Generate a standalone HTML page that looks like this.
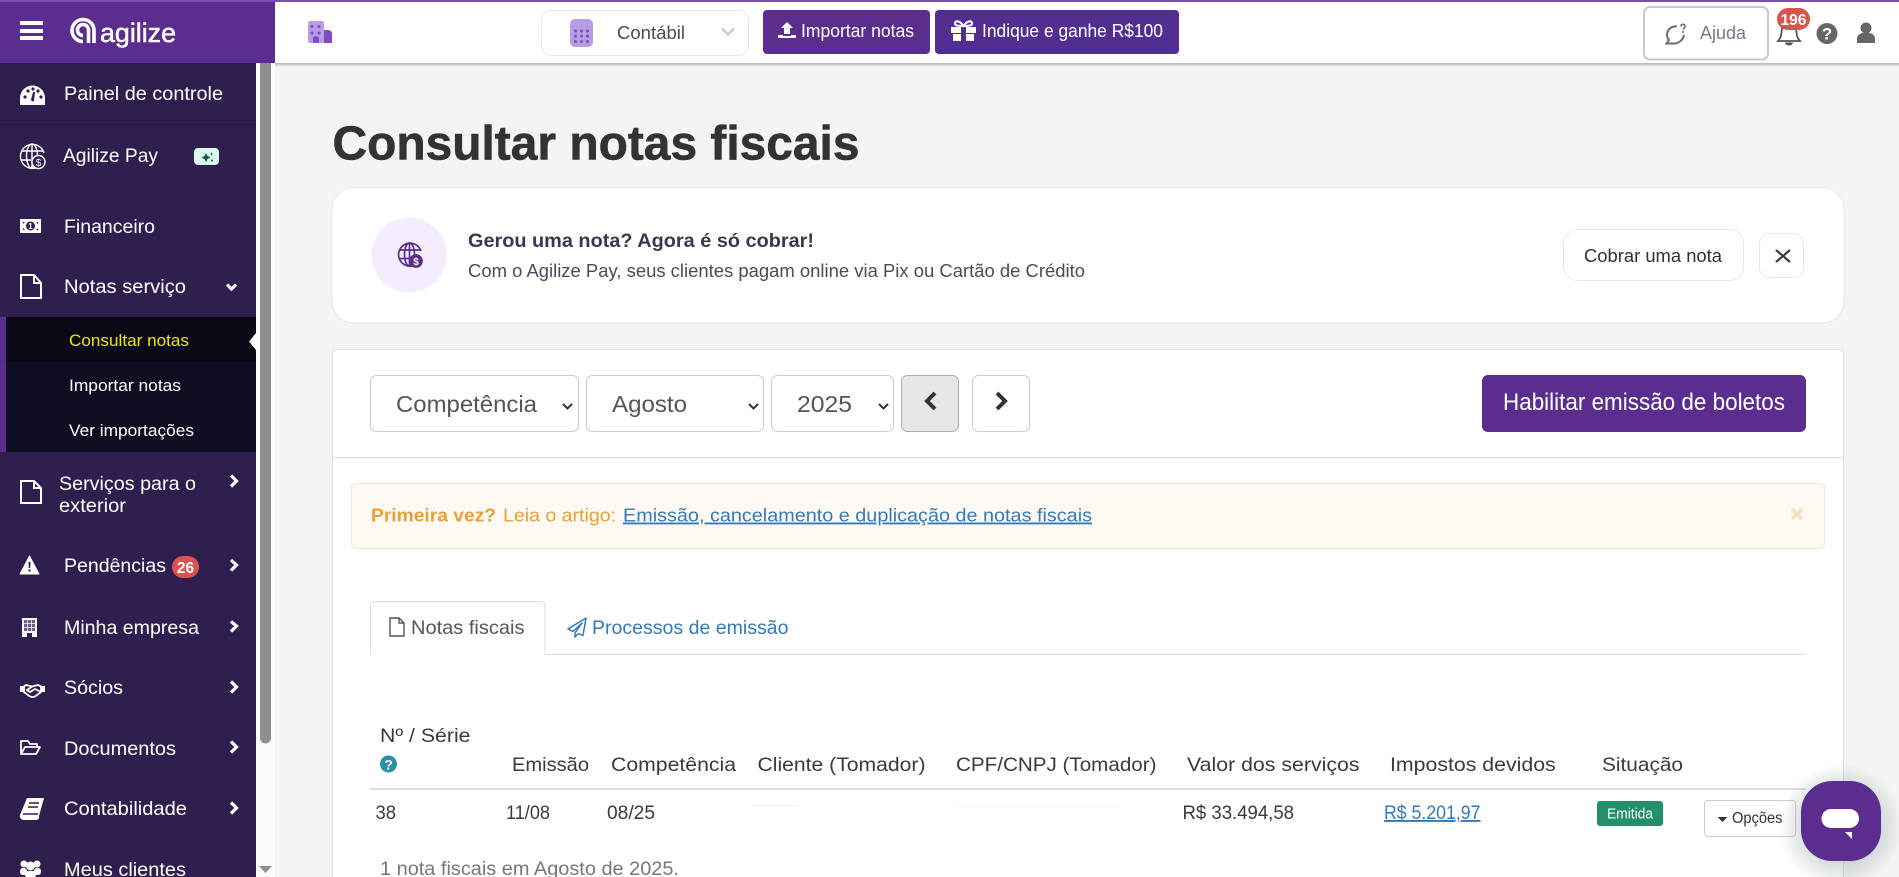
<!DOCTYPE html>
<html lang="pt-BR">
<head>
<meta charset="utf-8">
<title>Consultar notas fiscais</title>
<style>
html,body{margin:0;padding:0;width:1899px;height:877px;overflow:hidden;background:#f4f4f4}
svg{display:block}
text{font-family:"Liberation Sans",Arial,sans-serif}
.s{font-size:19.5px;fill:#fff}
.u{font-size:16.5px;fill:#fff}
.th{font-size:19.5px;fill:#3a3a3a}
.td{font-size:19px;fill:#3a3a3a}
.sel{font-size:23.500px;fill:#555}
</style>
</head>
<body>
<svg width="1899" height="877" viewBox="0 0 1899 877" xmlns="http://www.w3.org/2000/svg">
<defs>
<linearGradient id="sh" x1="0" y1="0" x2="0" y2="1"><stop offset="0" stop-color="#b5b5b5"/><stop offset="1" stop-color="#f4f4f4"/></linearGradient>
<radialGradient id="cs"><stop offset=".6" stop-color="#8a9a9a" stop-opacity=".35"/><stop offset="1" stop-color="#8a9a9a" stop-opacity="0"/></radialGradient>
</defs>

<!-- main background -->
<rect width="1899" height="877" fill="#f4f4f4"/>

<!-- top bar -->
<rect x="275" y="63" width="1624" height="4" fill="url(#sh)"/>
<rect x="275" y="0" width="1624" height="63" fill="#fff"/>
<rect x="0" y="0" width="1899" height="2" fill="#7a4db0"/>

<!-- scrollbar -->
<rect x="256" y="63" width="19" height="814" fill="#fbfbfb"/>
<path d="M260 63H271V738a5.500 5.500 0 0 1-11 0Z" fill="#8f8f8f"/>
<path d="M259 866H272L265.500 873Z" fill="#8f8f8f"/>

<!-- sidebar -->
<rect x="0" y="2" width="275" height="61" fill="#5b2d8e"/>
<rect x="0" y="63" width="256" height="814" fill="#2f1f4e"/>
<rect x="0" y="124" width="256" height="1" fill="#1d1a4a"/>
<rect x="20" y="21" width="23" height="4" fill="#fff"/><rect x="20" y="29" width="23" height="4" fill="#fff"/><rect x="20" y="36" width="23" height="4" fill="#fff"/>
<g fill="none" stroke="#fff" stroke-width="3.600">
<path d="M83 41.500A11 11 0 1 1 94 30V43"/>
<path d="M83 35.500A5.500 5.500 0 1 1 88.500 30V43"/>
</g>
<text x="100" y="42" font-size="26.500" fill="#fff" stroke="#fff" stroke-width=".5" textLength="76" lengthAdjust="spacingAndGlyphs">agilize</text>

<!-- gauge -->
<path d="M20 105V98A12.500 12.500 0 0 1 45 98V105Z" fill="#fff"/>
<g fill="#2f1f4e"><circle cx="25" cy="97" r="1.600"/><circle cx="28" cy="91" r="1.600"/><circle cx="33" cy="89" r="1.600"/><circle cx="38" cy="91" r="1.600"/><circle cx="41" cy="97" r="1.600"/><path d="M33 92l2 0-1 9a2 2 0 0 1-3-1Z"/></g>
<text class="s" x="64" y="100" textLength="159" lengthAdjust="spacingAndGlyphs">Painel de controle</text>

<!-- globe -->
<g fill="none" stroke="#fff" stroke-width="1.400">
<path d="M37 167.500A12 12 0 1 1 44 153"/><ellipse cx="32" cy="156" rx="5.500" ry="12"/><path d="M21 151H43M20.500 160H31M32 144V168"/>
<circle cx="38.500" cy="162" r="6.500" fill="#2f1f4e"/>
</g>
<text x="38.500" y="166" font-size="10" fill="#fff" text-anchor="middle">$</text>
<text class="s" x="63" y="162" textLength="95" lengthAdjust="spacingAndGlyphs">Agilize Pay</text>
<rect x="194" y="148" width="25" height="17" rx="4" fill="#d9f9ef"/>
<path d="M206 153l1.500 3 3 1.500-3 1.500-1.500 3-1.500-3-3-1.500 3-1.500ZM211.500 152.500l1 1.500-1 1.500-1-1.500ZM212 159l1 1.500-1 1.500-1-1.500Z" fill="#14563f"/>

<!-- money -->
<rect x="20" y="219" width="21" height="14" fill="#fff"/>
<circle cx="30.500" cy="226" r="4.500" fill="#2f1f4e"/>
<path d="M23 222H25L23 224ZM38 222H36L38 224ZM23 230H25L23 228ZM38 230H36L38 228Z" fill="#2f1f4e"/>
<text x="30.500" y="229" font-size="8" font-weight="bold" fill="#fff" text-anchor="middle">1</text>
<text class="s" x="64" y="233" textLength="91" lengthAdjust="spacingAndGlyphs">Financeiro</text>

<!-- doc -->
<path d="M21 275H34L41 283V298H21ZM34 275V283H41" fill="none" stroke="#fff" stroke-width="2"/>
<text class="s" x="64" y="293" textLength="122" lengthAdjust="spacingAndGlyphs">Notas serviço</text>
<path d="M227 284.500L231.500 289L236 284.500" fill="none" stroke="#fff" stroke-width="3.200"/>

<!-- submenu -->
<rect x="0" y="317" width="256" height="135" fill="#0f0d22"/>
<rect x="6" y="317" width="250" height="45" fill="#0a0814"/>
<rect x="0" y="317" width="6" height="135" fill="#5b2d8e"/>
<path d="M256 333V350L249 341.500Z" fill="#fff"/>
<text class="u" x="69" y="346" textLength="120" lengthAdjust="spacingAndGlyphs" style="fill:#e8e800">Consultar notas</text>
<text class="u" x="69" y="391" textLength="112" lengthAdjust="spacingAndGlyphs">Importar notas</text>
<text class="u" x="69" y="436" textLength="125" lengthAdjust="spacingAndGlyphs">Ver importações</text>

<!-- exterior -->
<path d="M21 481H34L41 488V503H21ZM34 481V488H41" fill="none" stroke="#fff" stroke-width="2"/>
<text class="s" x="59" y="490" textLength="137" lengthAdjust="spacingAndGlyphs">Serviços para o</text>
<text class="s" x="59" y="512" textLength="67" lengthAdjust="spacingAndGlyphs">exterior</text>
<path d="M231 475.500L236.500 481L231 486.500" fill="none" stroke="#fff" stroke-width="3.200"/>

<!-- pendencias -->
<path d="M29.500 556L39 574H20Z" fill="#fff" stroke="#fff" stroke-linejoin="round"/>
<path d="M28.500 562H30.500L30.200 568H28.800ZM28.500 569.500H30.500V571.500H28.500Z" fill="#2f1f4e"/>
<text class="s" x="64" y="572" textLength="102" lengthAdjust="spacingAndGlyphs">Pendências</text>
<rect x="172" y="556" width="27" height="22" rx="11" fill="#d9534f"/>
<text x="185.500" y="573" font-size="15.500" font-weight="bold" fill="#fff" text-anchor="middle">26</text>
<path d="M231 560L236.500 565L231 570.500" fill="none" stroke="#fff" stroke-width="3.200"/>

<!-- minha empresa -->
<rect x="22" y="618" width="15" height="19" fill="#fff"/>
<rect x="24" y="620" width="11" height="11" fill="#6a5f85"/>
<path d="M27.500 620v11M31.500 620v11M24 623.500h11M24 627.500h11" stroke="#fff" stroke-width=".7"/>
<path d="M27 637v-4h5v4z" fill="#2f1f4e"/>
<text class="s" x="64" y="634" textLength="135" lengthAdjust="spacingAndGlyphs">Minha empresa</text>
<path d="M231 621.500L236.500 626L231 631.500" fill="none" stroke="#fff" stroke-width="3.200"/>

<!-- socios -->
<path d="M26 685L32 686.500L38 685L41 686.500V692L35 696.500C33 697.500 30 697 28 695L24 692V686.500Z" fill="none" stroke="#fff" stroke-width="1.800"/>
<path d="M33 686L27 690L30 692L35 689L41 692" fill="none" stroke="#fff" stroke-width="1.800"/>
<path d="M20 686h3.500v6h-3.500zM41.500 686h3.500v6h-3.500z" fill="#fff"/>
<text class="s" x="64" y="694" textLength="59" lengthAdjust="spacingAndGlyphs">Sócios</text>
<path d="M231 681.500L236.500 687L231 692.500" fill="none" stroke="#fff" stroke-width="3.200"/>

<!-- documentos -->
<path d="M21 754V741H28L30 744H37V747M21 754H36L40 747H25Z" fill="none" stroke="#fff" stroke-width="1.800" stroke-linejoin="round"/>
<text class="s" x="64" y="755" textLength="112" lengthAdjust="spacingAndGlyphs">Documentos</text>
<path d="M231 741.500L236.500 747L231 752.500" fill="none" stroke="#fff" stroke-width="3.200"/>

<!-- contabilidade -->
<path d="M27 798H44L39 816A3 3 0 0 1 36 820H24A4 4 0 0 1 20 815Z" fill="#fff"/>
<path d="M29 803H39M28 807H38" stroke="#2f1f4e" stroke-width="1.600"/>
<path d="M23 814H38" stroke="#2f1f4e" stroke-width="1.500"/>
<text class="s" x="64" y="815" textLength="123" lengthAdjust="spacingAndGlyphs">Contabilidade</text>
<path d="M231 802.500L236.500 808L231 813.500" fill="none" stroke="#fff" stroke-width="3.200"/>

<!-- clientes -->
<g fill="#fff"><circle cx="24" cy="864" r="3.500"/><circle cx="37" cy="864" r="3.500"/><circle cx="30.500" cy="866" r="4.500"/><rect x="20" y="868" width="7" height="7" rx="3"/><rect x="34" y="868" width="7" height="7" rx="3"/><rect x="25" y="871" width="11" height="6" rx="2"/></g>
<text class="s" x="64" y="876" textLength="122" lengthAdjust="spacingAndGlyphs">Meus clientes</text>

<!-- top bar content -->
<rect x="308" y="21" width="16" height="22" rx="2" fill="#b79de3"/>
<path d="M324 30H328A4 4 0 0 1 332 34V43H324Z" fill="#7e4cc0"/>
<path d="M313 43V39A3 3 0 0 1 319 39V43Z" fill="#7e4cc0"/>
<g fill="#7e4cc0"><circle cx="312" cy="26.500" r="1.500"/><circle cx="319" cy="26.500" r="1.500"/><circle cx="312" cy="33" r="1.500"/><circle cx="319" cy="33" r="1.500"/></g>

<rect x="541.500" y="10.500" width="207" height="45" rx="10" fill="#fff" stroke="#e8e8f0"/>
<rect x="570" y="19" width="23" height="28" rx="5" fill="#b79de3"/>
<g fill="#7e4cc0"><circle cx="575.500" cy="31" r="1.500"/><circle cx="581.500" cy="31" r="1.500"/><circle cx="587.500" cy="31" r="1.500"/><circle cx="575.500" cy="36" r="1.500"/><circle cx="581.500" cy="36" r="1.500"/><circle cx="587.500" cy="36" r="1.500"/><circle cx="575.500" cy="41.500" r="1.500"/><circle cx="581.500" cy="41.500" r="1.500"/><circle cx="587.500" cy="41.500" r="1.500"/></g>
<text x="617" y="39" font-size="18.500" fill="#4a4a5c" textLength="68" lengthAdjust="spacingAndGlyphs">Contábil</text>
<path d="M722 28.500L728 34.500L734 28.500" fill="none" stroke="#c8c8d4" stroke-width="2.500"/>

<rect x="763" y="10" width="167" height="44" rx="4" fill="#5b2d8e"/>
<path d="M787 22L793 28H790V34H784V28H781Z M778 35H783V36H791V35H796V38H778Z" fill="#fff"/>
<text x="801" y="37" font-size="18" fill="#fff" textLength="113" lengthAdjust="spacingAndGlyphs">Importar notas</text>

<rect x="935" y="10" width="244" height="44" rx="4" fill="#512e8f"/>
<path d="M951 27H976V33H951ZM953 34H974V41H953Z" fill="#fff"/><rect x="961" y="27" width="5" height="14" fill="#512e8f"/>
<path d="M963.500 26C960 21 956 20 955 23C954 26 960 26 963.500 26C967 26 973 26 972 23C971 20 967 21 963.500 26Z" fill="none" stroke="#fff" stroke-width="2"/>
<text x="982" y="37" font-size="18" fill="#fff" textLength="181" lengthAdjust="spacingAndGlyphs">Indique e ganhe R$100</text>

<rect x="1644" y="7" width="124" height="52.500" rx="6" fill="#fff" stroke="#c8c6da" stroke-width="2"/>
<path d="M1677 26.500A8.500 8.500 0 0 0 1667 34C1667 37 1668 39 1669 40L1666.500 43.500H1675C1679 43 1683 40 1684 35" fill="none" stroke="#6d6880" stroke-width="2"/>
<path d="M1681 26.500A2 2 0 1 1 1684 28L1683 29.500" fill="none" stroke="#6d6880" stroke-width="1.500"/>
<circle cx="1683" cy="32" r="1" fill="#6d6880"/>
<text x="1700" y="39" font-size="18.500" fill="#7a7690" textLength="46" lengthAdjust="spacingAndGlyphs">Ajuda</text>

<path d="M1778 41C1782 37 1781 33 1782 29C1783 25 1795 25 1796 29C1797 33 1796 37 1800 41Z" fill="#fff" stroke="#555" stroke-width="1.800"/>
<path d="M1785 42.500A4 3 0 0 0 1793 42.500Z" fill="#555"/>
<rect x="1777" y="8" width="33" height="22" rx="11" fill="#d9534f"/>
<text x="1793.500" y="25" font-size="15.500" font-weight="bold" fill="#fff" text-anchor="middle">196</text>

<circle cx="1827" cy="33.500" r="10.500" fill="#666"/>
<text x="1827" y="39.500" font-size="17" font-weight="bold" fill="#fff" text-anchor="middle">?</text>
<circle cx="1866" cy="28" r="5.500" fill="#666"/>
<path d="M1857 43V39A6 6 0 0 1 1863 33H1869A6 6 0 0 1 1875 39V43Z" fill="#666"/>

<!-- title -->
<text x="332.500" y="159.500" font-size="48" font-weight="bold" fill="#333" stroke="#333" stroke-width=".6" textLength="527" lengthAdjust="spacingAndGlyphs">Consultar notas fiscais</text>

<!-- promo -->
<rect x="332" y="187.500" width="1512" height="135.500" rx="22" fill="#fff" stroke="#e8e8ec"/>
<circle cx="409" cy="255" r="37.500" fill="#f3ecfc"/>
<g fill="none" stroke="#5b2d8e" stroke-width="1.700">
<path d="M414 265.500A11.500 11.500 0 1 1 421 251"/><ellipse cx="409.500" cy="254.500" rx="5" ry="11.500"/><path d="M399 250H420M398.500 258.500H409M409.500 243V266"/>
<circle cx="416" cy="261" r="6" fill="#5b2d8e"/>
</g>
<text x="416" y="265" font-size="10" font-weight="bold" fill="#fff" text-anchor="middle">$</text>
<text x="468" y="247" font-size="19.500" font-weight="bold" fill="#3c3650" textLength="346" lengthAdjust="spacingAndGlyphs">Gerou uma nota? Agora é só cobrar!</text>
<text x="468" y="277" font-size="18" fill="#4a4a5c" textLength="617" lengthAdjust="spacingAndGlyphs">Com o Agilize Pay, seus clientes pagam online via Pix ou Cartão de Crédito</text>
<rect x="1563.500" y="229.500" width="180" height="51" rx="14" fill="#fff" stroke="#e8e8f2"/>
<text x="1584" y="262" font-size="18" fill="#2e2e40" textLength="138" lengthAdjust="spacingAndGlyphs">Cobrar uma nota</text>
<rect x="1759.500" y="233.500" width="44" height="44" rx="10" fill="#fff" stroke="#e8e8f2"/>
<path d="M1776 250L1790 262M1790 250L1776 262" stroke="#3c3c4c" stroke-width="2.200" fill="none"/>

<!-- panel -->
<rect x="332.500" y="349.500" width="1511" height="540" rx="3" fill="#fff" stroke="#ddd"/>
<rect x="333" y="457" width="1510" height="1" fill="#ddd"/>

<rect x="370.500" y="375.500" width="208" height="56" rx="6" fill="#fff" stroke="#ccc"/>
<text class="sel" x="396" y="412" textLength="141" lengthAdjust="spacingAndGlyphs">Competência</text>
<path d="M563 404L567.500 408.500L572 404" fill="none" stroke="#333" stroke-width="2"/>
<rect x="586.500" y="375.500" width="177" height="56" rx="6" fill="#fff" stroke="#ccc"/>
<text class="sel" x="612" y="412" textLength="75" lengthAdjust="spacingAndGlyphs">Agosto</text>
<path d="M749 404L753.500 408.500L758 404" fill="none" stroke="#333" stroke-width="2"/>
<rect x="771.500" y="375.500" width="122" height="56" rx="6" fill="#fff" stroke="#ccc"/>
<text class="sel" x="797" y="412" textLength="55" lengthAdjust="spacingAndGlyphs">2025</text>
<path d="M879 404L883.500 408.500L888 404" fill="none" stroke="#333" stroke-width="2"/>

<rect x="901.500" y="375.500" width="57" height="56" rx="6" fill="#e6e6e6" stroke="#adadad"/>
<path d="M935 393L927 401L935 409" fill="none" stroke="#333" stroke-width="4"/>
<rect x="972.500" y="375.500" width="57" height="56" rx="6" fill="#fff" stroke="#ccc"/>
<path d="M997 393L1005 401L997 409" fill="none" stroke="#333" stroke-width="4"/>

<rect x="1482" y="375" width="324" height="57" rx="6" fill="#5b2d8e"/>
<text x="1503" y="410" font-size="24.500" fill="#fff" textLength="282" lengthAdjust="spacingAndGlyphs">Habilitar emissão de boletos</text>

<!-- alert -->
<rect x="351.500" y="483.500" width="1473" height="65" rx="4" fill="#fef9f3" stroke="#f7e6d3"/>
<text x="371" y="521.500" font-size="18.500" font-weight="bold" fill="#e8a03a" textLength="125" lengthAdjust="spacingAndGlyphs">Primeira vez?</text>
<text x="503" y="521.500" font-size="18.500" fill="#e8a03a" textLength="113" lengthAdjust="spacingAndGlyphs">Leia o artigo:</text>
<text x="623" y="521.500" font-size="18.500" fill="#337ab7" text-decoration="underline" textLength="469" lengthAdjust="spacingAndGlyphs">Emissão, cancelamento e duplicação de notas fiscais</text>
<path d="M1792 509L1802 519M1802 509L1792 519" stroke="#f5dfc2" stroke-width="3.500" fill="none"/>

<!-- tabs -->
<rect x="370" y="654" width="1436" height="1" fill="#ddd"/>
<path d="M370.500 655V605A4 4 0 0 1 374.500 601.500H541A4 4 0 0 1 545 605V655" fill="#fff" stroke="#ddd"/>
<path d="M390 618H399L404 623V636H390ZM399 618V623H404" fill="none" stroke="#555" stroke-width="1.400"/>
<text x="411" y="634" font-size="19.500" fill="#555" textLength="113.500" lengthAdjust="spacingAndGlyphs">Notas fiscais</text>
<path d="M586 618L568 629L573 631.500L582 623L575 633V637L578.500 633.500L583 635.500Z" fill="none" stroke="#337ab7" stroke-width="1.500" stroke-linejoin="round"/>
<text x="592" y="634" font-size="19.500" fill="#337ab7" textLength="196.500" lengthAdjust="spacingAndGlyphs">Processos de emissão</text>

<!-- table -->
<text class="th" x="380" y="742" textLength="90.500" lengthAdjust="spacingAndGlyphs">Nº / Série</text>
<circle cx="388.500" cy="764" r="8.500" fill="#2a8fa8"/>
<text x="388.500" y="769.500" font-size="14" font-weight="bold" fill="#fff" text-anchor="middle">?</text>
<text class="th" x="512" y="771" textLength="77" lengthAdjust="spacingAndGlyphs">Emissão</text>
<text class="th" x="611" y="771" textLength="125" lengthAdjust="spacingAndGlyphs">Competência</text>
<text class="th" x="757.500" y="771" textLength="168" lengthAdjust="spacingAndGlyphs">Cliente (Tomador)</text>
<text class="th" x="956" y="771" textLength="200.500" lengthAdjust="spacingAndGlyphs">CPF/CNPJ (Tomador)</text>
<text class="th" x="1187" y="771" textLength="172.500" lengthAdjust="spacingAndGlyphs">Valor dos serviços</text>
<text class="th" x="1390" y="771" textLength="165.700" lengthAdjust="spacingAndGlyphs">Impostos devidos</text>
<text class="th" x="1602" y="771" textLength="81" lengthAdjust="spacingAndGlyphs">Situação</text>
<rect x="370" y="788" width="1436" height="2" fill="#ddd"/>
<rect x="752" y="805" width="47" height="1" fill="#f1f1f1"/>
<rect x="955" y="806" width="165" height="1" fill="#f6f6f6"/>
<text class="td" x="375.500" y="819" textLength="20.500" lengthAdjust="spacingAndGlyphs">38</text>
<text class="td" x="506" y="819" textLength="44" lengthAdjust="spacingAndGlyphs">11/08</text>
<text class="td" x="607" y="819" textLength="48" lengthAdjust="spacingAndGlyphs">08/25</text>
<text class="td" x="1182.500" y="819" textLength="111.500" lengthAdjust="spacingAndGlyphs">R$ 33.494,58</text>
<text class="td" x="1384" y="819" textLength="96.500" text-decoration="underline" lengthAdjust="spacingAndGlyphs" style="fill:#337ab7">R$ 5.201,97</text>
<rect x="1597" y="801" width="66" height="25" rx="3" fill="#23906a"/>
<text x="1607" y="818.500" font-size="14.500" fill="#fff" textLength="46" lengthAdjust="spacingAndGlyphs">Emitida</text>
<rect x="1704.500" y="800.500" width="91" height="36" rx="3" fill="#fff" stroke="#ccc"/>
<path d="M1717.500 817H1727.500L1722.500 822Z" fill="#333"/>
<text x="1732" y="823" font-size="16" fill="#333" textLength="50.500" lengthAdjust="spacingAndGlyphs">Opções</text>
<text x="380" y="875" font-size="19" fill="#777" textLength="299" lengthAdjust="spacingAndGlyphs">1 nota fiscais em Agosto de 2025.</text>

<!-- chat -->
<ellipse cx="1841" cy="826" rx="62" ry="62" fill="url(#cs)"/>
<rect x="1801" y="781" width="80" height="80" rx="31" fill="#5b2d8e"/>
<rect x="1821.500" y="809" width="37.500" height="19" rx="9.500" fill="#fff"/>
<path d="M1845 832H1852V839Z" fill="#fff"/>
</svg>
</body>
</html>
